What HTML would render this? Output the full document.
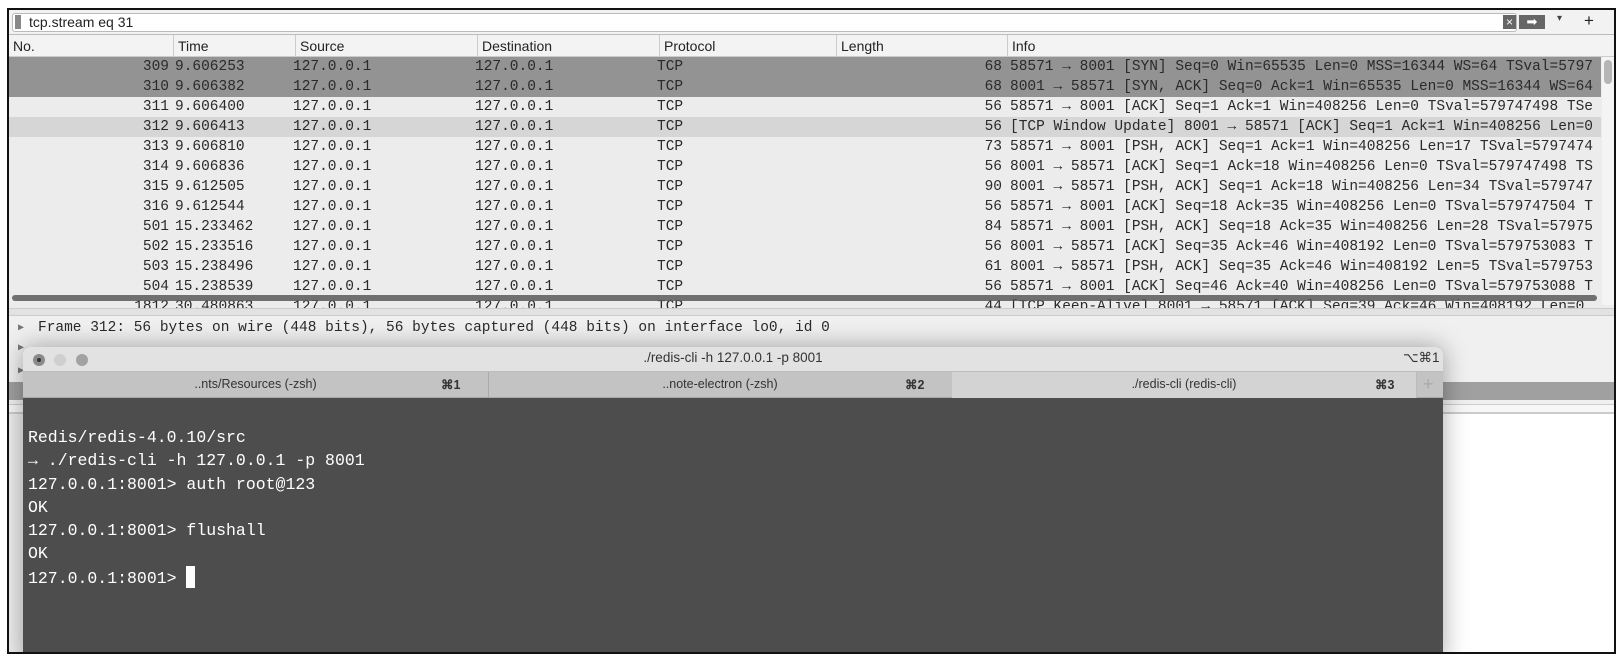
<!DOCTYPE html>
<html><head><meta charset="utf-8"><style>
*{margin:0;padding:0;box-sizing:border-box}
body{width:1624px;height:661px;background:#fff;position:relative;overflow:hidden;font-family:"Liberation Sans",sans-serif}
.frame{position:absolute;left:7px;top:8px;width:1609px;height:646px;border:2px solid #111;background:#ececec;overflow:hidden}
.abs{position:absolute}
.mono{font-family:"Liberation Mono",monospace;font-size:14.5px;color:#2a2a2a;white-space:pre}
.row{position:absolute;left:0;width:1592px;height:20px;line-height:20px}
.row span{position:absolute;top:0}
.hdr span{position:absolute;top:0;font-size:14px;color:#222}
</style></head><body>
<div class="frame">
  <div class="abs" style="left:0;top:0;width:1605px;height:25px;background:#f2f2f2;border-bottom:1px solid #bbb"></div>
  <div class="abs" style="left:3px;top:3px;width:1505px;height:19px;background:#fff;border:1px solid #bbb;border-radius:3px"></div>
  <div class="abs" style="left:6px;top:5px;width:6px;height:14px;background:#888"></div>
  <div class="abs" style="left:20px;top:4px;font-size:14px;color:#222">tcp.stream eq 31</div>
  <div class="abs" style="left:1494px;top:5px;width:13px;height:14px;background:#666;color:#fff;font-size:12px;line-height:14px;text-align:center">×</div>
  <div class="abs" style="left:1510px;top:5px;width:26px;height:14px;background:#666;color:#fff;font-size:13px;line-height:14px;text-align:center">➡</div>
  <div class="abs" style="left:1548px;top:3px;font-size:10px;color:#444">▾</div>
  <div class="abs" style="left:1575px;top:1px;font-size:17px;color:#222">+</div>
  <div class="abs hdr" style="left:0;top:25px;width:1605px;height:22px;background:#f3f3f3;border-bottom:1px solid #ccc;line-height:22px">
    <span style="left:4px">No.</span>
    <span style="left:164px;border-left:1px solid #ccc;padding-left:4px">Time</span>
    <span style="left:286px;border-left:1px solid #ccc;padding-left:4px">Source</span>
    <span style="left:468px;border-left:1px solid #ccc;padding-left:4px">Destination</span>
    <span style="left:650px;border-left:1px solid #ccc;padding-left:4px">Protocol</span>
    <span style="left:827px;border-left:1px solid #ccc;padding-left:4px">Length</span>
    <span style="left:998px;border-left:1px solid #ccc;padding-left:4px">Info</span>
  </div>
  <div id="rows" class="mono"></div>
  <div class="abs" style="left:1593px;top:47px;width:12px;height:248px;background:#f4f4f4"></div>
  <div class="abs" style="left:1595px;top:50px;width:8px;height:24px;background:#b5b5b5;border-radius:4px"></div>
  <div class="abs" style="left:3px;top:285px;width:1585px;height:6px;background:#5a5a5a;border-radius:3px;opacity:.85"></div>
  <div class="abs" style="left:0;top:298px;width:1605px;height:8px;background:#e2e2e2;border-top:1px solid #ccc;border-bottom:1px solid #ccc"></div>
  <div class="abs" style="left:0;top:306px;width:1605px;height:340px;background:#f0f0f0"></div>
  <div class="abs mono" style="left:9px;top:312px;font-size:10px;color:#777">▶</div>
  <div class="abs mono" style="left:29px;top:310px">Frame 312: 56 bytes on wire (448 bits), 56 bytes captured (448 bits) on interface lo0, id 0</div>
  <div class="abs mono" style="left:9px;top:332px;font-size:10px;color:#777">▶<br><br>▶<br><br>▶</div>
  <div class="abs" style="left:0;top:372px;width:1605px;height:18px;background:#a0a0a0"></div>
  <div class="abs" style="left:0;top:394px;width:1605px;height:10px;background:#f7f7f7;border-top:1px solid #ccc;border-bottom:2px solid #ccc"></div>
  <div class="abs" style="left:0;top:404px;width:1605px;height:242px;background:#fff"></div>
  <div class="abs" style="left:0;top:404px;width:16px;height:242px;background:#ececec"></div>
  <div class="abs" style="left:14px;top:337px;width:1420px;height:315px;background:#4e4d4e;border-radius:6px 6px 0 0;box-shadow:0 0 25px rgba(0,0,0,.35);overflow:hidden">
    <div class="abs" style="left:0;top:0;width:1420px;height:25px;background:#e2e2e2;border-bottom:1px solid #bdbdbd"></div>
    <div class="abs" style="left:10px;top:7px;width:12px;height:12px;border-radius:6px;background:#8a8a8a"></div>
    <div class="abs" style="left:14px;top:11px;width:4px;height:4px;border-radius:2px;background:#333"></div>
    <div class="abs" style="left:31px;top:7px;width:12px;height:12px;border-radius:6px;background:#cfcfcf"></div>
    <div class="abs" style="left:53px;top:7px;width:12px;height:12px;border-radius:6px;background:#a2a2a2"></div>
    <div class="abs" style="left:0;top:3px;width:1420px;text-align:center;font-size:13.5px;color:#333">./redis-cli -h 127.0.0.1 -p 8001</div>
    <div class="abs" style="left:1380px;top:3px;font-size:13.5px;color:#333">⌥⌘1</div>
    <div class="abs" style="left:0;top:25px;width:1420px;height:26px;background:#c3c3c3;border-bottom:1px solid #a8a8a8"></div>
    <div class="abs" style="left:465px;top:25px;width:1px;height:26px;background:#aaa"></div>
    <div class="abs" style="left:929px;top:25px;width:464px;height:26px;background:#d3d3d3"></div>
    <div class="abs" style="left:1393px;top:25px;width:1px;height:26px;background:#bbb"></div>
    <div class="abs" style="left:0;top:30px;width:465px;text-align:center;font-size:12.5px;color:#333">..nts/Resources (-zsh)</div>
    <div class="abs" style="left:418px;top:30px;font-size:12.5px;color:#333;font-weight:bold">⌘1</div>
    <div class="abs" style="left:465px;top:30px;width:464px;text-align:center;font-size:12.5px;color:#333">..note-electron (-zsh)</div>
    <div class="abs" style="left:882px;top:30px;font-size:12.5px;color:#333;font-weight:bold">⌘2</div>
    <div class="abs" style="left:929px;top:30px;width:464px;text-align:center;font-size:12.5px;color:#333">./redis-cli (redis-cli)</div>
    <div class="abs" style="left:1352px;top:30px;font-size:12.5px;color:#333;font-weight:bold">⌘3</div>
    <div class="abs" style="left:1400px;top:27px;font-size:18px;color:#aaa">+</div>
    <div class="abs" style="left:5px;top:79px;font-family:'Liberation Mono',monospace;font-size:16.5px;line-height:23.3px;color:#fff;white-space:pre">Redis/redis-4.0.10/src
→ ./redis-cli -h 127.0.0.1 -p 8001
127.0.0.1:8001&gt; auth root@123
OK
127.0.0.1:8001&gt; flushall
OK
127.0.0.1:8001&gt; <span style="display:inline-block;width:9px;height:22px;background:#fff;vertical-align:-5px"></span></div>
  </div>
</div>
<script>
var d=[
["309","9.606253","68","58571 → 8001 [SYN] Seq=0 Win=65535 Len=0 MSS=16344 WS=64 TSval=5797","#939393"],
["310","9.606382","68","8001 → 58571 [SYN, ACK] Seq=0 Ack=1 Win=65535 Len=0 MSS=16344 WS=64","#939393"],
["311","9.606400","56","58571 → 8001 [ACK] Seq=1 Ack=1 Win=408256 Len=0 TSval=579747498 TSe","#ececec"],
["312","9.606413","56","[TCP Window Update] 8001 → 58571 [ACK] Seq=1 Ack=1 Win=408256 Len=0","#d6d6d6"],
["313","9.606810","73","58571 → 8001 [PSH, ACK] Seq=1 Ack=1 Win=408256 Len=17 TSval=5797474","#ececec"],
["314","9.606836","56","8001 → 58571 [ACK] Seq=1 Ack=18 Win=408256 Len=0 TSval=579747498 TS","#ececec"],
["315","9.612505","90","8001 → 58571 [PSH, ACK] Seq=1 Ack=18 Win=408256 Len=34 TSval=579747","#ececec"],
["316","9.612544","56","58571 → 8001 [ACK] Seq=18 Ack=35 Win=408256 Len=0 TSval=579747504 T","#ececec"],
["501","15.233462","84","58571 → 8001 [PSH, ACK] Seq=18 Ack=35 Win=408256 Len=28 TSval=57975","#ececec"],
["502","15.233516","56","8001 → 58571 [ACK] Seq=35 Ack=46 Win=408192 Len=0 TSval=579753083 T","#ececec"],
["503","15.238496","61","8001 → 58571 [PSH, ACK] Seq=35 Ack=46 Win=408192 Len=5 TSval=579753","#ececec"],
["504","15.238539","56","58571 → 8001 [ACK] Seq=46 Ack=40 Win=408256 Len=0 TSval=579753088 T","#ececec"],
["1812","30.480863","44","[TCP Keep-Alive] 8001 → 58571 [ACK] Seq=39 Ack=46 Win=408192 Len=0","#ececec"]];
var h="";
d.forEach(function(r,i){
h+='<div class="row" style="top:'+(47+i*20)+'px;background:'+r[4]+'">'+
'<span style="right:1432px">'+r[0]+'</span><span style="left:166px">'+r[1]+'</span>'+
'<span style="left:284px">127.0.0.1</span><span style="left:466px">127.0.0.1</span><span style="left:648px">TCP</span>'+
'<span style="right:599px">'+r[2]+'</span><span style="left:1001px">'+r[3]+'</span></div>';});
document.getElementById("rows").innerHTML=h;
</script>
</body></html>
